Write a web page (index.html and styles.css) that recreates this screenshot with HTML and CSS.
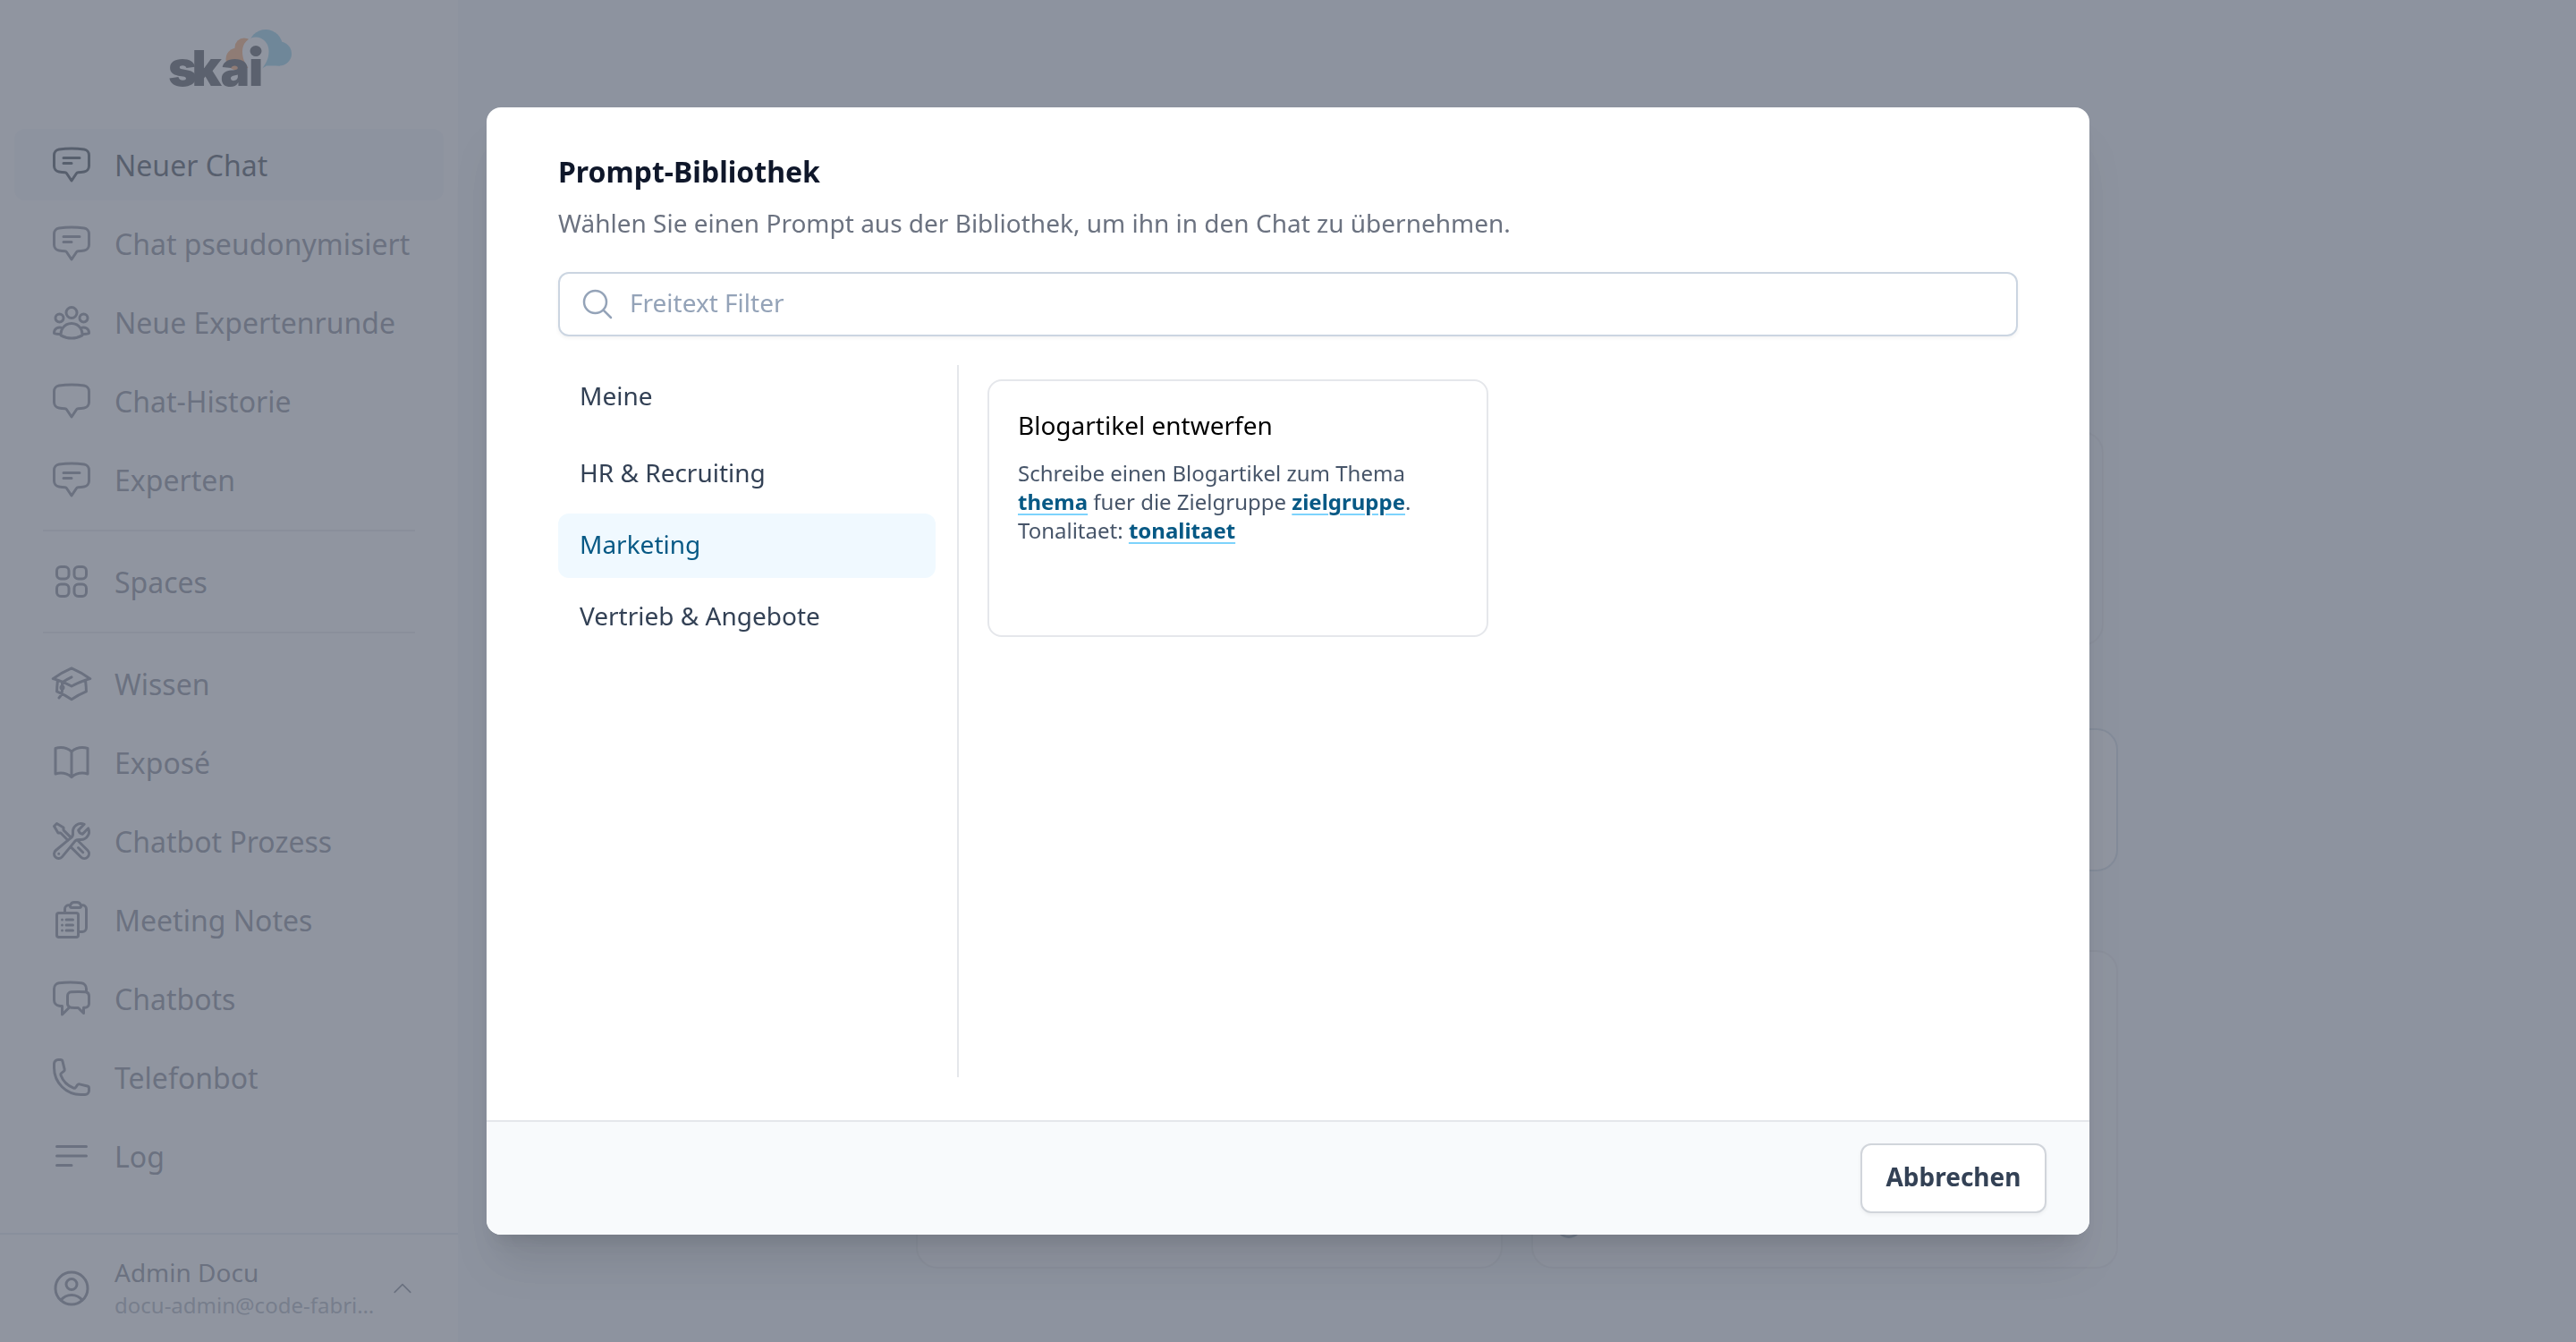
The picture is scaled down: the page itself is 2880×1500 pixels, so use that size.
FILE: index.html
```
<!DOCTYPE html>
<html lang="de">
<head>
  <meta charset="utf-8">
  <title>skai - Prompt-Bibliothek</title>
  <link rel="stylesheet" href="styles.css">
</head>
<body>
  <div class="app">
    <aside class="sidebar">
      <div class="logo">
        <svg width="144" height="72" viewBox="184 28 144 72">
          <g fill="#fb9a55">
            <circle cx="273" cy="53" r="10.500"/>
            <circle cx="265" cy="66" r="12.500"/>
            <path d="M264 52h18v24h-20z"/>
          </g>
          <g fill="#7cc6e4">
            <circle cx="297" cy="52" r="19"/>
            <circle cx="312.500" cy="60" r="13.500"/>
            <path d="M292 50h21v23.500h-15l-5 3z"/>
          </g>
          <path fill="#fff" d="M286 41.500a14.500 15.500 0 0 1 14.500 16c0 8-3 13-7.500 19.500V98h-14V78c-5-7-8-12-8-20.500a15 15.500 0 0 1 15-16z"/>
          <text class="logo-text" x="188 214.500 246.500 278" y="95.500">skai</text>
          <ellipse cx="286" cy="57" rx="6.500" ry="6" fill="#2f3238"/>
        </svg>
      </div>
      <nav class="nav">
        <a class="nav-item active" href="#"><svg class="icon" viewBox="0 0 24 24"><path d="M7.500 8.250h9m-9 3H12m-9.750 1.510c0 1.600 1.123 2.994 2.707 3.227 1.129.166 2.270.293 3.423.379.350.026.670.210.865.501L12 21l2.755-4.133a1.140 1.140 0 0 1 .865-.501 48.172 48.172 0 0 0 3.423-.379c1.584-.233 2.707-1.626 2.707-3.228V6.741c0-1.602-1.123-2.995-2.707-3.228A48.394 48.394 0 0 0 12 3c-2.392 0-4.744.175-7.043.513C3.373 3.746 2.250 5.140 2.250 6.741v6.018Z"/></svg>Neuer Chat</a>
        <a class="nav-item" href="#"><svg class="icon" viewBox="0 0 24 24"><path d="M7.500 8.250h9m-9 3H12m-9.750 1.510c0 1.600 1.123 2.994 2.707 3.227 1.129.166 2.270.293 3.423.379.350.026.670.210.865.501L12 21l2.755-4.133a1.140 1.140 0 0 1 .865-.501 48.172 48.172 0 0 0 3.423-.379c1.584-.233 2.707-1.626 2.707-3.228V6.741c0-1.602-1.123-2.995-2.707-3.228A48.394 48.394 0 0 0 12 3c-2.392 0-4.744.175-7.043.513C3.373 3.746 2.250 5.140 2.250 6.741v6.018Z"/></svg>Chat pseudonymisiert</a>
        <a class="nav-item" href="#"><svg class="icon" viewBox="0 0 24 24"><path d="M18 18.720a9.094 9.094 0 0 0 3.741-.479 3 3 0 0 0-4.682-2.720m.940 3.198.001.031c0 .225-.012.447-.037.666A11.944 11.944 0 0 1 12 21c-2.170 0-4.207-.576-5.963-1.584A6.062 6.062 0 0 1 6 18.719m12 0a5.971 5.971 0 0 0-.941-3.197m0 0A5.995 5.995 0 0 0 12 12.750a5.995 5.995 0 0 0-5.058 2.772m0 0a3 3 0 0 0-4.681 2.720 8.986 8.986 0 0 0 3.740.477m.940-3.197a5.971 5.971 0 0 0-.940 3.197M15 6.750a3 3 0 1 1-6 0 3 3 0 0 1 6 0Zm6 3a2.250 2.250 0 1 1-4.500 0 2.250 2.250 0 0 1 4.500 0Zm-13.500 0a2.250 2.250 0 1 1-4.500 0 2.250 2.250 0 0 1 4.500 0Z"/></svg>Neue Expertenrunde</a>
        <a class="nav-item" href="#"><svg class="icon" viewBox="0 0 24 24"><path d="M2.250 12.760c0 1.600 1.123 2.994 2.707 3.227 1.129.166 2.270.293 3.423.379.350.026.670.210.865.501L12 21l2.755-4.133a1.140 1.140 0 0 1 .865-.501 48.172 48.172 0 0 0 3.423-.379c1.584-.233 2.707-1.626 2.707-3.228V6.741c0-1.602-1.123-2.995-2.707-3.228A48.394 48.394 0 0 0 12 3c-2.392 0-4.744.175-7.043.513C3.373 3.746 2.250 5.140 2.250 6.741v6.018Z"/></svg>Chat-Historie</a>
        <a class="nav-item" href="#"><svg class="icon" viewBox="0 0 24 24"><path d="M7.500 8.250h9m-9 3H12m-9.750 1.510c0 1.600 1.123 2.994 2.707 3.227 1.129.166 2.270.293 3.423.379.350.026.670.210.865.501L12 21l2.755-4.133a1.140 1.140 0 0 1 .865-.501 48.172 48.172 0 0 0 3.423-.379c1.584-.233 2.707-1.626 2.707-3.228V6.741c0-1.602-1.123-2.995-2.707-3.228A48.394 48.394 0 0 0 12 3c-2.392 0-4.744.175-7.043.513C3.373 3.746 2.250 5.140 2.250 6.741v6.018Z"/></svg>Experten</a>
        <div class="nav-divider"></div>
        <a class="nav-item" href="#"><svg class="icon" viewBox="0 0 24 24"><rect x="3.750" y="3.750" width="6.750" height="6.750" rx="2.250"/><rect x="13.500" y="3.750" width="6.750" height="6.750" rx="2.250"/><rect x="3.750" y="13.500" width="6.750" height="6.750" rx="2.250"/><rect x="13.500" y="13.500" width="6.750" height="6.750" rx="2.250"/></svg>Spaces</a>
        <div class="nav-divider"></div>
        <a class="nav-item" href="#"><svg class="icon" viewBox="0 0 24 24"><path d="M4.260 10.147a60.438 60.438 0 0 0-.491 6.347A48.620 48.620 0 0 1 12 20.904a48.620 48.620 0 0 1 8.232-4.410 60.460 60.460 0 0 0-.491-6.347m-15.482 0a50.636 50.636 0 0 0-2.658-.813A59.906 59.906 0 0 1 12 3.493a59.903 59.903 0 0 1 10.399 5.840c-.896.248-1.783.520-2.658.814m-15.482 0A50.717 50.717 0 0 1 12 13.489a50.702 50.702 0 0 1 7.740-3.342M6.750 15a.750.750 0 1 0 0-1.500.750.750 0 0 0 0 1.500Zm0 0v-3.675A55.378 55.378 0 0 1 12 8.443m-7.007 11.550A5.981 5.981 0 0 0 6.750 15.750v-1.500"/></svg>Wissen</a>
        <a class="nav-item" href="#"><svg class="icon" viewBox="0 0 24 24"><path d="M12 6.042A8.967 8.967 0 0 0 6 3.750c-1.052 0-2.062.180-3 .512v14.250A8.987 8.987 0 0 1 6 18c2.305 0 4.408.867 6 2.292m0-14.250a8.966 8.966 0 0 1 6-2.292c1.052 0 2.062.180 3 .512v14.250A8.987 8.987 0 0 0 18 18a8.967 8.967 0 0 0-6 2.292m0-14.250v14.250"/></svg>Exposé</a>
        <a class="nav-item" href="#"><svg class="icon" viewBox="0 0 24 24"><path d="M11.420 15.170 17.250 21A2.652 2.652 0 0 0 21 17.250l-5.877-5.877M11.420 15.170l2.496-3.030c.317-.384.740-.626 1.208-.766M11.420 15.170l-4.655 5.653a2.548 2.548 0 1 1-3.586-3.586l6.837-5.630m5.108-.233c.550-.164 1.163-.188 1.743-.140a4.500 4.500 0 0 0 4.486-6.336l-3.276 3.277a3.004 3.004 0 0 1-2.250-2.250l3.276-3.276a4.500 4.500 0 0 0-6.336 4.486c.091 1.076-.071 2.264-.904 2.950l-.102.085m-1.745 1.437L5.909 7.500H4.500L2.250 3.750l1.500-1.500L7.500 4.500v1.409l4.260 4.260m-1.745 1.437 1.745-1.437m6.615 8.206L15.750 15.750M4.867 19.125h.008v.008h-.008v-.008Z"/></svg>Chatbot Prozess</a>
        <a class="nav-item" href="#"><svg class="icon" viewBox="0 0 24 24"><path d="M9 12h3.750M9 15h3.750M9 18h3.750m3 .750H18a2.250 2.250 0 0 0 2.250-2.250V6.108c0-1.135-.845-2.098-1.976-2.192a48.424 48.424 0 0 0-1.123-.080m-5.801 0c-.065.210-.100.433-.100.664 0 .414.336.750.750.750h4.500a.750.750 0 0 0 .750-.750 2.250 2.250 0 0 0-.100-.664m-5.800 0A2.251 2.251 0 0 1 13.500 2.250H15c1.012 0 1.867.668 2.150 1.586m-5.800 0c-.376.023-.750.050-1.124.080C9.095 4.010 8.250 4.973 8.250 6.108V8.250m0 0H4.875c-.621 0-1.125.504-1.125 1.125v11.250c0 .621.504 1.125 1.125 1.125h9.750c.621 0 1.125-.504 1.125-1.125V9.375c0-.621-.504-1.125-1.125-1.125H8.250ZM6.750 12h.008v.008H6.750V12Zm0 3h.008v.008H6.750V15Zm0 3h.008v.008H6.750V18Z"/></svg>Meeting Notes</a>
        <a class="nav-item" href="#"><svg class="icon" viewBox="0 0 24 24"><path d="M20.250 8.511c.884.284 1.500 1.128 1.500 2.097v4.286c0 1.136-.847 2.100-1.980 2.193-.340.027-.680.052-1.020.072v3.091l-3-3c-1.354 0-2.694-.055-4.020-.163a2.115 2.115 0 0 1-.825-.242m9.345-8.334a2.126 2.126 0 0 0-.476-.095 48.640 48.640 0 0 0-8.048 0c-1.131.094-1.976 1.057-1.976 2.192v4.286c0 .837.460 1.580 1.155 1.951m9.345-8.334V6.637c0-1.621-1.152-3.026-2.760-3.235A48.455 48.455 0 0 0 11.250 3c-2.115 0-4.198.137-6.240.402-1.608.209-2.760 1.614-2.760 3.235v6.226c0 1.621 1.152 3.026 2.760 3.235.577.075 1.157.140 1.740.194V21l4.155-4.155"/></svg>Chatbots</a>
        <a class="nav-item" href="#"><svg class="icon" viewBox="0 0 24 24"><path d="M2.250 6.750c0 8.284 6.716 15 15 15h2.250a2.250 2.250 0 0 0 2.250-2.250v-1.372c0-.516-.351-.966-.852-1.091l-4.423-1.106c-.440-.110-.902.055-1.173.417l-.970 1.293c-.282.376-.769.542-1.210.380a12.035 12.035 0 0 1-7.143-7.143c-.162-.441.004-.928.380-1.210l1.293-.970c.363-.271.527-.734.417-1.173L6.963 3.102a1.125 1.125 0 0 0-1.091-.852H4.500A2.250 2.250 0 0 0 2.250 4.500v2.250Z"/></svg>Telefonbot</a>
        <a class="nav-item" href="#"><svg class="icon" viewBox="0 0 24 24"><path d="M3.750 6.750h16.500M3.750 12h16.500m-16.500 5.250H12"/></svg>Log</a>
      </nav>
      <div class="user">
        <svg class="icon" viewBox="0 0 24 24"><path d="M17.982 18.725A7.488 7.488 0 0 0 12 15.750a7.488 7.488 0 0 0-5.982 2.975m11.963 0a9 9 0 1 0-11.963 0m11.963 0A8.966 8.966 0 0 1 12 21a8.966 8.966 0 0 1-5.982-2.275M15 9.750a3 3 0 1 1-6 0 3 3 0 0 1 6 0Z"/></svg>
        <div class="user-info">
          <div class="user-name">Admin Docu</div>
          <div class="user-mail">docu-admin@code-fabrik.com</div>
        </div>
        <svg class="icon chevron" viewBox="0 0 24 24"><path d="m4.500 15.750 7.500-7.500 7.500 7.500"/></svg>
      </div>
    </aside>

    <main class="main">
      <div class="panel panel-intro"></div>
      <div class="panel panel-input"></div>
      <div class="panel-row">
        <div class="panel"></div>
        <div class="panel panel-radio"><span class="radio"></span></div>
      </div>
    </main>
  </div>

  <div class="overlay">
    <div class="modal">
      <div class="modal-body">
        <h2>Prompt-Bibliothek</h2>
        <p class="subtitle">Wählen Sie einen Prompt aus der Bibliothek, um ihn in den Chat zu übernehmen.</p>
        <div class="search">
          <svg class="icon search-icon" viewBox="0 0 24 24"><path d="m21 21-5.197-5.197m0 0A7.500 7.500 0 1 0 5.196 5.196a7.500 7.500 0 0 0 10.607 10.607Z"/></svg>
          <input type="text" placeholder="Freitext Filter">
        </div>
        <div class="library">
          <div class="categories">
            <button class="category own">Meine</button>
            <button class="category">HR &amp; Recruiting</button>
            <button class="category selected">Marketing</button>
            <button class="category">Vertrieb &amp; Angebote</button>
          </div>
          <div class="prompts">
            <div class="prompt-card">
              <h3>Blogartikel entwerfen</h3>
              <p>Schreibe einen Blogartikel zum Thema <b>thema</b> fuer die Zielgruppe <b>zielgruppe</b>. Tonalitaet: <b>tonalitaet</b></p>
            </div>
          </div>
        </div>
      </div>
      <div class="modal-footer">
        <button class="cancel-btn">Abbrechen</button>
      </div>
    </div>
  </div>
</body>
</html>
```
FILE: styles.css
```
* {
  box-sizing: border-box;
}

body {
  margin: 0;
  font-family: "Noto Sans", sans-serif;
  height: 1500px;
  overflow: hidden;
}

h2, h3, p {
  margin: 0;
}

button, input {
  font-family: inherit;
}

.app {
  display: flex;
  height: 1500px;
  background: #f1f5f9;
}

.icon {
  flex: none;
  width: 48px;
  height: 48px;
  fill: none;
  stroke: currentColor;
  stroke-width: 1.5;
  stroke-linecap: round;
  stroke-linejoin: round;
}

/* Sidebar */
.sidebar {
  display: flex;
  flex-direction: column;
  width: 512px;
  background: #fff;
  color: #6b7280;
}

.logo {
  display: flex;
  justify-content: center;
  height: 144px;
  padding-top: 28px;
}

.logo-text {
  font-family: Inter, sans-serif;
  font-weight: 900;
  font-size: 55px;
  fill: #2f3238;
}

.nav {
  display: flex;
  flex-direction: column;
  gap: 8px;
  flex: 1;
  padding: 0 16px;
}

.nav-item {
  display: flex;
  align-items: center;
  gap: 24px;
  height: 80px;
  padding-left: 40px;
  border-radius: 12px;
  font-size: 32px;
  color: inherit;
  text-decoration: none;
}

.nav-item.active {
  background: #f1f5f9;
  color: #1f2937;
}

.nav-divider {
  height: 2px;
  margin: 8px 32px;
  background: #e5e7eb;
}

.user {
  display: flex;
  align-items: center;
  height: 122px;
  padding: 0 48px 0 56px;
  border-top: 2px solid #e2e8f0;
}

.user-info {
  flex: 1;
  min-width: 0;
  margin: 0 16px 2px 24px;
}

.user-name {
  font-size: 28px;
  line-height: 40px;
}

.user-mail {
  overflow: hidden;
  font-size: 24px;
  line-height: 34px;
  color: #9ca3af;
  text-overflow: ellipsis;
  white-space: nowrap;
}

.chevron {
  width: 28px;
  height: 28px;
}

/* Chat page behind the dialog */
.main {
  width: 1344px;
  margin: 0 auto;
  padding-top: 482px;
}

.panel {
  border: 2px solid #e5e7eb;
  border-radius: 24px;
}

.panel-intro {
  height: 240px;
  margin: 0 16px;
}

.panel-input {
  height: 160px;
  margin-top: 92px;
  border-color: #cbd5e1;
  background: #fff;
}

.panel-row {
  display: grid;
  grid-template-columns: 1fr 1fr;
  gap: 32px;
  height: 356px;
  margin-top: 88px;
}

.panel-row .panel {
  background: #f8fafc;
}

.panel-radio {
  display: flex;
  align-items: flex-end;
  padding: 0 0 32px 25px;
}

.radio {
  width: 30px;
  height: 30px;
  border: 3px solid #94a3b8;
  border-radius: 50%;
}

/* Dialog */
.overlay {
  position: fixed;
  inset: 0;
  display: flex;
  align-items: center;
  justify-content: center;
  background: rgba(107, 114, 128, 0.75);
}

.modal {
  display: flex;
  flex-direction: column;
  width: 1792px;
  height: 1260px;
  overflow: hidden;
  border-radius: 16px;
  background: #fff;
  box-shadow: 0 40px 50px -10px rgba(0, 0, 0, 0.1), 0 16px 20px -12px rgba(0, 0, 0, 0.1);
}

.modal-body {
  flex: 1;
  padding: 48px 80px;
}

.modal-body h2 {
  font-size: 32px;
  font-weight: 700;
  line-height: 48px;
  color: #0f172a;
}

.subtitle {
  margin-top: 12px;
  font-size: 28px;
  line-height: 42px;
  color: #6b7280;
}

.search {
  display: flex;
  align-items: center;
  gap: 16px;
  height: 72px;
  margin-top: 34px;
  padding: 0 22px;
  border: 2px solid #cbd5e1;
  border-radius: 12px;
  box-shadow: 0 2px 4px rgba(0, 0, 0, 0.05);
  color: #94a3b8;
}

.search-icon {
  width: 40px;
  height: 40px;
}

.search input {
  flex: 1;
  height: 100%;
  padding: 0 0 5px;
  border: 0;
  outline: 0;
  background: none;
  font-size: 28px;
}

.search input::placeholder {
  color: #94a3b8;
}

.library {
  display: flex;
  height: 796px;
  margin-top: 32px;
}

.categories {
  display: flex;
  flex-direction: column;
  gap: 8px;
  width: 448px;
  padding-right: 24px;
  border-right: 2px solid #e5e7eb;
}

.category {
  height: 72px;
  padding: 0 24px 5px;
  border: 0;
  border-radius: 12px;
  background: none;
  font-size: 28px;
  text-align: left;
  color: #334155;
}

.category.own {
  margin-bottom: 6px;
}

.category.selected {
  background: #f0f9ff;
  color: #075985;
}

.prompts {
  padding: 16px 0 0 32px;
}

.prompt-card {
  width: 560px;
  height: 288px;
  padding: 29px 32px;
  border: 2px solid #e5e7eb;
  border-radius: 16px;
}

.prompt-card h3 {
  font-size: 28px;
  font-weight: 400;
  line-height: 40px;
  color: #000;
}

.prompt-card p {
  margin-top: 18px;
  font-size: 24px;
  line-height: 32px;
  color: #475569;
}

.prompt-card b {
  font-weight: 700;
  color: #075985;
  text-decoration: underline;
  text-decoration-color: #7dd3fc;
  text-decoration-thickness: 2px;
  text-underline-offset: 4px;
}

.modal-footer {
  display: flex;
  align-items: center;
  justify-content: flex-end;
  height: 128px;
  padding: 0 48px;
  border-top: 2px solid #e5e7eb;
  background: #f8fafc;
}

.cancel-btn {
  width: 208px;
  height: 78px;
  padding: 0 0 4px;
  border: 2px solid #d1d5db;
  border-radius: 12px;
  background: #fff;
  box-shadow: 0 2px 4px rgba(0, 0, 0, 0.05);
  font-size: 28px;
  font-weight: 700;
  color: #334155;
}
```
